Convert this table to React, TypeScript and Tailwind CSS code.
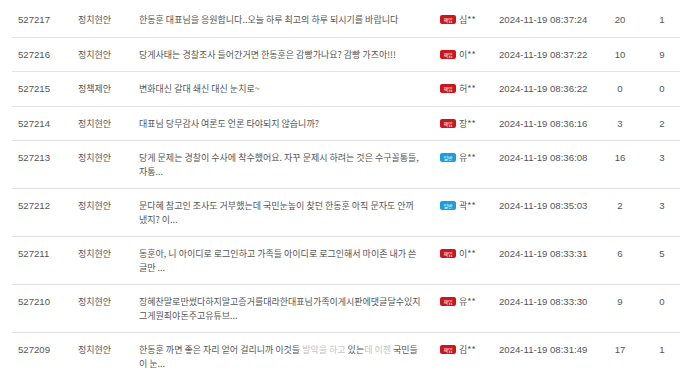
import type { ReactNode } from 'react';

type Post = {
  no: string;
  category: string;
  title: ReactNode;
  badge: 'duty' | 'normal';
  author: string;
  date: string;
  views: string;
  likes: string;
};

const posts: Post[] = [
  { no: '527217', category: '정치현안', title: '한동훈 대표님을 응원합니다..오늘 하루 최고의 하루 되시기를 바랍니다', badge: 'duty', author: '심**', date: '2024-11-19 08:37:24', views: '20', likes: '1' },
  { no: '527216', category: '정치현안', title: '당게사태는 경찰조사 들어간거면 한동훈은 감빵가나요? 감빵 가즈아!!!', badge: 'duty', author: '이**', date: '2024-11-19 08:37:22', views: '10', likes: '9' },
  { no: '527215', category: '정책제안', title: '변화대신 갈대 쇄신 대신 눈치로~', badge: 'duty', author: '허**', date: '2024-11-19 08:36:22', views: '0', likes: '0' },
  { no: '527214', category: '정치현안', title: '대표님 당무감사 여론도 언론 타야되지 않습니까?', badge: 'duty', author: '장**', date: '2024-11-19 08:36:16', views: '3', likes: '2' },
  {
    no: '527213', category: '정치현안',
    title: <>당게 문제는 경찰이 수사에 착수했어요. 자꾸 문제시 하려는 것은 수구꼴통들,<br />자통...</>,
    badge: 'normal', author: '유**', date: '2024-11-19 08:36:08', views: '16', likes: '3',
  },
  {
    no: '527212', category: '정치현안',
    title: <>문다혜 참고인 조사도 거부했는데 국민눈높이 찾던 한동훈 아직 문자도 안꺼<br />냈지? 이...</>,
    badge: 'normal', author: '곽**', date: '2024-11-19 08:35:03', views: '2', likes: '3',
  },
  {
    no: '527211', category: '정치현안',
    title: <>동훈아, 니 아이디로 로그인하고 가족들 아이디로 로그인해서 마이존 내가 쓴<br />글만 ...</>,
    badge: 'duty', author: '이**', date: '2024-11-19 08:33:31', views: '6', likes: '5',
  },
  {
    no: '527210', category: '정치현안',
    title: <>장혜찬말로만썼다하지말고증거를대라한대표님가족이게시판에댓글달수있지<br />그게뭔죄야돈주고유튜브...</>,
    badge: 'duty', author: '유**', date: '2024-11-19 08:33:30', views: '9', likes: '0',
  },
  {
    no: '527209', category: '정치현안',
    title: (
      <>
        한동훈 까면 좋은 자리 얻어 걸리니까 이것들 <span className="text-[#c4c4c4]">발악을</span>{' '}
        <span className="text-[#c4c4c4]">하고</span> 있는<span className="text-[#c4c4c4]">데 이젠</span> 국민들
        <br />이 눈...
      </>
    ),
    badge: 'duty', author: '김**', date: '2024-11-19 08:31:49', views: '17', likes: '1',
  },
];

function Badge({ kind }: { kind: 'duty' | 'normal' }) {
  return (
    <span
      className={`inline-flex h-[9px] w-[16px] items-center justify-center rounded-[2px] text-[5px] leading-none text-white ${
        kind === 'duty' ? 'bg-[#c9171e]' : 'bg-[#1c9cd8]'
      }`}
    >
      {kind === 'duty' ? '책임' : '일반'}
    </span>
  );
}

export default function App() {
  return (
    <div className="min-h-screen bg-white pt-[3px] pl-3 text-[#555555] overflow-hidden">
      {posts.map((p) => (
        <div
          key={p.no}
          className="grid grid-cols-[60px_61px_300px_60px_100px_54px_30px] border-b border-[#e4e4e4] py-[10px] leading-[13.5px]"
        >
          <div className="pl-[6px] font-['Liberation_Sans',sans-serif] text-[9.6px]">{p.no}</div>
          <div className="pl-[6px] font-['Noto_Sans_CJK_KR',sans-serif] text-[9px]">{p.category}</div>
          <div className="pl-[6px] font-['Noto_Sans_CJK_KR',sans-serif] text-[9px]">{p.title}</div>
          <div className="flex items-start gap-[3px] pl-[7px] font-['Noto_Sans_CJK_KR',sans-serif] text-[9px]">
            <span className="flex h-[13.5px] items-center">
              <Badge kind={p.badge} />
            </span>
            <span>{p.author}</span>
          </div>
          <div className="pl-[6px] font-['Liberation_Sans',sans-serif] text-[9.6px]">{p.date}</div>
          <div className="text-center font-['Liberation_Sans',sans-serif] text-[9.6px]">{p.views}</div>
          <div className="text-center font-['Liberation_Sans',sans-serif] text-[9.6px]">{p.likes}</div>
        </div>
      ))}
    </div>
  );
}
